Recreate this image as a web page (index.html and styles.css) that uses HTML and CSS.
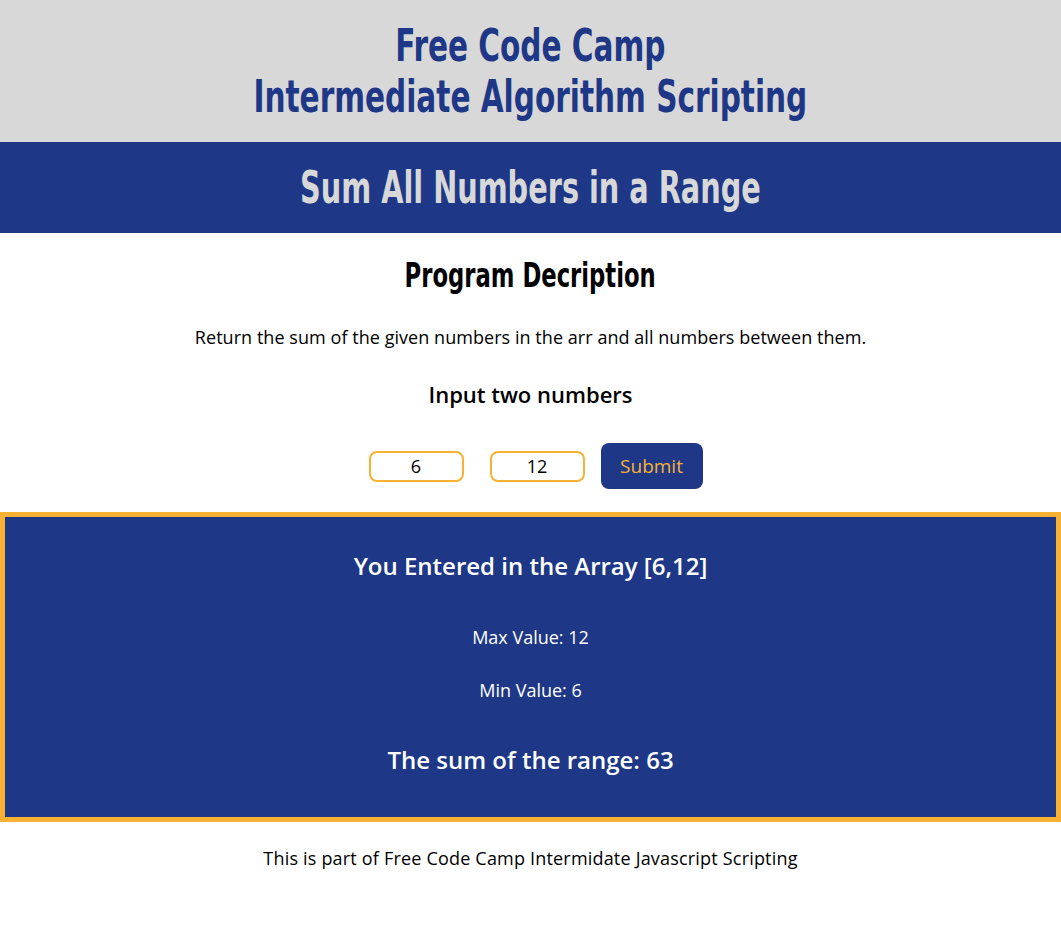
FILE: index.html
```html
<!DOCTYPE html>
<html lang="en">
<head>
<meta charset="utf-8">
<title>Sum All Numbers in a Range</title>
<link rel="stylesheet" href="styles.css">
</head>
<body>
<header class="top">
  <h1 class="top-title">Free Code Camp<br>Intermediate Algorithm Scripting</h1>
</header>
<section class="band">
  <h2 class="band-title">Sum All Numbers in a Range</h2>
</section>
<main class="main">
  <h3 class="desc-title">Program Decription</h3>
  <p class="desc">Return the sum of the given numbers in the arr and all numbers between them.</p>
  <h4 class="input-title">Input two numbers</h4>
  <form class="form">
    <input class="num" type="text" value="6">
    <input class="num" type="text" value="12">
    <button class="submit" type="button">Submit</button>
  </form>
</main>
<section class="result">
  <p class="res-head">You Entered in the Array [6,12]</p>
  <p class="res-line">Max Value: 12</p>
  <p class="res-line">Min Value: 6</p>
  <p class="res-sum">The sum of the range: 63</p>
</section>
<footer class="foot">
  <p class="foot-text">This is part of Free Code Camp Intermidate Javascript Scripting</p>
</footer>
</body>
</html>
```
FILE: styles.css
```css
html, body {
  margin: 0;
  padding: 0;
  background: #ffffff;
}
body {
  font-family: "Open Sans", "Noto Sans", sans-serif;
  color: #000;
  text-align: center;
}
.top {
  background: #d8d8d8;
  height: 142px;
  display: flex;
  align-items: center;
  justify-content: center;
}
.top-title, .band-title, .desc-title {
  font-family: "DejaVu Sans Condensed", "DejaVu Sans", sans-serif;
  font-weight: bold;
  margin: 0;
  display: inline-block;
}
.top-title {
  color: #1e3887;
  font-size: 45px;
  line-height: 51px;
  transform: scaleX(0.73);
}
.band {
  background: #1e3887;
  height: 91px;
  display: flex;
  align-items: center;
  justify-content: center;
}
.band-title {
  color: #d8d8d8;
  font-size: 45px;
  line-height: 50px;
  transform: scaleX(0.71);
}
.main {
  padding-top: 20px;
}
.desc-title {
  font-size: 33px;
  line-height: 46px;
  transform: scaleX(0.765);
}
.desc {
  font-size: 18px;
  margin: 26px 0 0;
  line-height: 24px;
  letter-spacing: 0.05px;
}
.input-title {
  font-size: 22px;
  font-weight: 600;
  margin: 31px 0 0;
  line-height: 28px;
}
.form {
  display: flex;
  justify-content: center;
  align-items: center;
  margin-top: 35px;
  height: 46px;
  padding-left: 10px;
}
.num {
  width: 95px;
  height: 31px;
  box-sizing: border-box;
  border: 2px solid #f8b133;
  border-radius: 8px;
  text-align: center;
  font-family: "Open Sans", sans-serif;
  font-size: 18px;
  padding: 0;
  margin-right: 26px;
  color: #000;
}
.num:nth-of-type(2) {
  margin-right: 16px;
}
.submit {
  width: 102px;
  height: 46px;
  background: #1e3887;
  color: #f8b133;
  border: none;
  border-radius: 8px;
  font-family: "Open Sans", sans-serif;
  font-size: 19px;
}
.result {
  margin-top: 23px;
  background: #1e3887;
  border: 5px solid #f8b133;
  box-sizing: border-box;
  height: 310px;
  color: #fff;
  padding-top: 33px;
}
.result p {
  margin: 0;
}
.res-head {
  font-size: 24px;
  font-weight: 600;
  line-height: 32px;
}
.res-line {
  font-size: 18px;
  line-height: 24px;
}
.result .res-line:nth-of-type(2) {
  margin-top: 43px;
}
.result .res-line:nth-of-type(3) {
  margin-top: 29px;
}
.result .res-sum {
  font-size: 24px;
  font-weight: 600;
  line-height: 32px;
  margin-top: 42px;
}
.foot-text {
  margin: 24px 0 0;
  font-size: 18px;
  line-height: 24px;
  letter-spacing: 0.19px;
}
```
